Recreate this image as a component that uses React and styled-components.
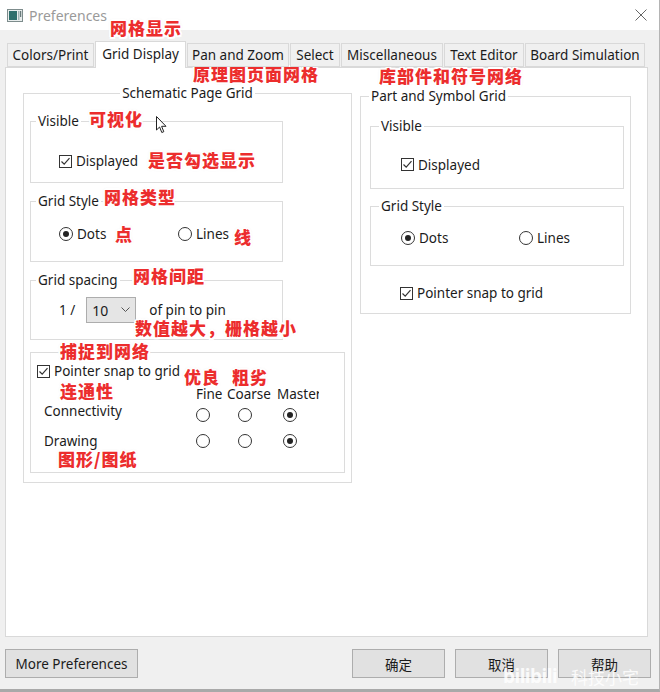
import React from 'react';
import styled, { createGlobalStyle } from 'styled-components';

const GlobalStyle = createGlobalStyle`
  html, body {
    margin: 0;
    padding: 0;
    background: #f0f0f0;
  }
  body {
    font-family: 'Noto Sans', 'Liberation Sans', sans-serif;
    font-size: 13px;
    color: #1b1b1b;
  }
`;

const tabs = [
    { label: 'Colors/Print', w: 87 },
    { label: 'Grid Display', w: 91, active: true },
    { label: 'Pan and Zoom', w: 102 },
    { label: 'Select', w: 50 },
    { label: 'Miscellaneous', w: 102 },
    { label: 'Text Editor', w: 80 },
    { label: 'Board Simulation', w: 120 },
];

const notes = [
    { text: '网格显示', x: 110, y: 19 },
    { text: '原理图页面网格', x: 193, y: 65 },
    { text: '库部件和符号网络', x: 379, y: 67 },
    { text: '可视化', x: 89, y: 110 },
    { text: '是否勾选显示', x: 148, y: 151 },
    { text: '网格类型', x: 104, y: 188 },
    { text: '点', x: 115, y: 225 },
    { text: '线', x: 234, y: 228 },
    { text: '网格间距', x: 133, y: 267 },
    { text: '数值越大，栅格越小', x: 135, y: 319 },
    { text: '捕捉到网络', x: 60, y: 342 },
    { text: '优良', x: 184, y: 368 },
    { text: '粗劣', x: 232, y: 368 },
    { text: '连通性', x: 60, y: 382 },
    { text: '图形/图纸', x: 58, y: 450 },
];

function CheckBox({ checked = true }) {
    return (
        <Box>
            {checked && (
                <svg width="11" height="11" viewBox="0 0 11 11">
                    <path d="M1.5 5.5 L4.2 8.2 L9.5 2.2" fill="none" stroke="#333" strokeWidth="1.2" />
                </svg>
            )}
        </Box>
    );
}

function Radio({ checked }) {
    return <RadioDot $on={checked} />;
}

function Check({ label }) {
    return (
        <Option>
            <CheckBox />
            <span>{label}</span>
        </Option>
    );
}

function RadioOption({ label, checked }) {
    return (
        <Option>
            <Radio checked={checked} />
            <span>{label}</span>
        </Option>
    );
}

function App() {
    return (
        <Window>
            <GlobalStyle />
            <TitleBar>
                <svg width="16" height="13" viewBox="0 0 16 13">
                    <rect x="0.5" y="0.5" width="15" height="12" fill="#e8eded" stroke="#7d8c8c" />
                    <rect x="2" y="2" width="8" height="9" fill="#2f6f6c" />
                    <rect x="11" y="2" width="1.5" height="9" fill="#9fb3b3" />
                    <rect x="13.2" y="2" width="1" height="6" fill="#4a5f5f" />
                </svg>
                <Title>Preferences</Title>
                <svg width="12" height="12" viewBox="0 0 12 12">
                    <path d="M0.5 0.5 L11.5 11.5 M11.5 0.5 L0.5 11.5" stroke="#666" strokeWidth="1" />
                </svg>
            </TitleBar>

            <Body>
                <TabStrip>
                    {tabs.map(t => (
                        <Tab key={t.label} $w={t.w} $active={t.active}>{t.label}</Tab>
                    ))}
                </TabStrip>

                <Panel>
                    <Group $w={329}>
                        <Legend $center>Schematic Page Grid</Legend>
                        <Stack $pt={10} $pl={6} $pb={9}>
                            <Group $w={253}>
                                <Legend $lx={5}>Visible</Legend>
                                <Content $h={52} $pt={10}>
                                    <Check label="Displayed" />
                                </Content>
                            </Group>
                            <Group $w={253}>
                                <Legend $lx={5}>Grid Style</Legend>
                                <Content $h={51} $pb={4}>
                                    <Choices $col={119}>
                                        <RadioOption label="Dots" checked />
                                        <RadioOption label="Lines" />
                                    </Choices>
                                </Content>
                            </Group>
                            <Group $w={253}>
                                <Legend $lx={5}>Grid spacing</Legend>
                                <Content $h={50} $pb={8}>
                                    <SpacingRow>
                                        <span>1 /</span>
                                        <Select>
                                            <span>10</span>
                                            <svg width="9" height="6" viewBox="0 0 9 6">
                                                <path d="M0.5 0.5 L4.5 4.5 L8.5 0.5" fill="none" stroke="#555" strokeWidth="1" />
                                            </svg>
                                        </Select>
                                        <PinText>of pin to pin</PinText>
                                    </SpacingRow>
                                </Content>
                            </Group>
                            <SnapBox>
                                <Check label="Pointer snap to grid" />
                                <HeaderGrid>
                                    <span />
                                    <span>Fine</span>
                                    <span>Coarse</span>
                                    <Clip>Master</Clip>
                                </HeaderGrid>
                                <RadioGrid $mt={0}>
                                    <RowLabel $shift={-4}>Connectivity</RowLabel>
                                    <Radio />
                                    <Radio />
                                    <Radio checked />
                                </RadioGrid>
                                <RadioGrid $mt={2}>
                                    <RowLabel>Drawing</RowLabel>
                                    <Radio />
                                    <Radio />
                                    <Radio checked />
                                </RadioGrid>
                            </SnapBox>
                        </Stack>
                    </Group>

                    <Group $w={271} $mt={3}>
                        <Legend $lx={8}>Part and Symbol Grid</Legend>
                        <Stack $pt={12} $pl={9} $pb={10} $gap={8}>
                            <Group $w={254}>
                                <Legend $lx={8}>Visible</Legend>
                                <Content $h={53} $pt={6} $pl={30}>
                                    <Check label="Displayed" />
                                </Content>
                            </Group>
                            <Group $w={254}>
                                <Legend $lx={8}>Grid Style</Legend>
                                <Content $h={50} $pb={4} $pl={30}>
                                    <Choices $col={118}>
                                        <RadioOption label="Dots" checked />
                                        <RadioOption label="Lines" />
                                    </Choices>
                                </Content>
                            </Group>
                            <SnapRow>
                                <Check label="Pointer snap to grid" />
                            </SnapRow>
                        </Stack>
                    </Group>
                </Panel>

                <ButtonRow>
                    <Button $w={133}>More Preferences</Button>
                    <ButtonGroup>
                        <Button $w={93} $cjk>确定</Button>
                        <Button $w={93} $cjk>取消</Button>
                        <Button $w={93} $cjk>帮助</Button>
                    </ButtonGroup>
                </ButtonRow>
            </Body>

            {notes.map(n => (
                <Note key={n.text} $x={n.x} $y={n.y}>{n.text}</Note>
            ))}

            <Cursor width="12" height="18" viewBox="0 0 12 18">
                <path d="M0.5 0.5 L0.5 14 L3.6 11 L5.8 16.5 L7.8 15.7 L5.6 10.3 L10 10.3 Z" fill="#fff" stroke="#222" strokeWidth="1" strokeLinejoin="round" />
            </Cursor>

            <Watermark>
                <Bili>bilibili</Bili>
                <span>科技小宅</span>
            </Watermark>
        </Window>
    );
}

export default App;

const Window = styled.div`
    position: relative;
    width: 660px;
    height: 692px;
    display: flex;
    flex-direction: column;
    background: #f0f0f0;
    border-right: 1px solid #b4b4b4;
    border-bottom: 3px solid #a9a9a9;
    box-sizing: border-box;
    overflow: hidden;
`;

const TitleBar = styled.div`
    height: 30px;
    flex: none;
    background: #fff;
    display: flex;
    align-items: center;
    gap: 6px;
    padding: 0 12px 0 7px;
`;

const Title = styled.span`
    flex: 1;
    font-size: 14px;
    color: #9a9a9a;
`;

const Body = styled.div`
    flex: 1;
    display: flex;
    flex-direction: column;
    padding: 11px 11px 0 5px;
`;

const TabStrip = styled.div`
    display: flex;
    align-items: flex-end;
    gap: 1px;
    height: 26px;
    padding-left: 2px;
    position: relative;
    z-index: 1;
`;

const Tab = styled.div`
    width: ${p => p.$w}px;
    height: ${p => (p.$active ? 27 : 24)}px;
    margin-bottom: ${p => (p.$active ? -1 : 0)}px;
    box-sizing: border-box;
    display: flex;
    align-items: center;
    justify-content: center;
    padding-bottom: ${p => (p.$active ? 3 : 0)}px;
    background: ${p => (p.$active ? '#fff' : '#f0f0f0')};
    border: 1px solid #d9d9d9;
    border-bottom: ${p => (p.$active ? 'none' : '1px solid #d9d9d9')};
    font-size: 13.5px;
    white-space: nowrap;
`;

const Panel = styled.div`
    height: 570px;
    box-sizing: border-box;
    background: #fff;
    border: 1px solid #d9d9d9;
    display: flex;
    align-items: flex-start;
    gap: 8px;
    padding: 16px 0 0 17px;
`;

const Group = styled.fieldset`
    margin: ${p => p.$mt || 0}px 0 0 0;
    padding: 0;
    min-width: 0;
    width: ${p => p.$w}px;
    box-sizing: border-box;
    border: 1px solid #dcdcdc;
`;

const Legend = styled.legend`
    padding: 0 2px;
    margin-left: ${p => (p.$center ? 'auto' : `${p.$lx}px`)};
    margin-right: ${p => (p.$center ? 'auto' : '0')};
    line-height: 18px;
    font-size: 13.5px;
`;

const Stack = styled.div`
    display: flex;
    flex-direction: column;
    gap: ${p => p.$gap ?? 9}px;
    padding: ${p => p.$pt}px 0 ${p => p.$pb}px ${p => p.$pl}px;
`;

const Content = styled.div`
    height: ${p => p.$h}px;
    box-sizing: border-box;
    padding: ${p => p.$pt || 0}px 0 ${p => p.$pb || 0}px ${p => p.$pl ?? 28}px;
    display: flex;
    align-items: center;
`;

const Option = styled.label`
    display: flex;
    align-items: center;
    gap: 4px;
    font-size: 13.5px;
    white-space: nowrap;
`;

const Box = styled.span`
    width: 13px;
    height: 13px;
    box-sizing: border-box;
    border: 1px solid #333;
    background: #fff;
    display: inline-flex;
    align-items: center;
    justify-content: center;
`;

const RadioDot = styled.span`
    width: 14px;
    height: 14px;
    box-sizing: border-box;
    border: 1px solid #333;
    border-radius: 50%;
    background: #fff;
    display: inline-flex;
    align-items: center;
    justify-content: center;

    &::after {
        content: '';
        width: 6px;
        height: 6px;
        border-radius: 50%;
        background: ${p => (p.$on ? '#222' : 'transparent')};
    }
`;

const Choices = styled.div`
    display: grid;
    grid-template-columns: ${p => p.$col}px auto;
    align-items: center;
`;

const SpacingRow = styled.div`
    display: flex;
    align-items: center;
    font-size: 13.5px;
`;

const Select = styled.div`
    width: 50px;
    height: 26px;
    box-sizing: border-box;
    margin-left: 11px;
    background: #e5e5e5;
    border: 1px solid #adadad;
    display: flex;
    align-items: center;
    justify-content: space-between;
    padding: 0 5px 0 5px;
    font-size: 14px;
`;

const PinText = styled.span`
    margin-left: 13px;
`;

const SnapBox = styled.div`
    width: 315px;
    height: 121px;
    box-sizing: border-box;
    margin-top: 3px;
    border: 1px solid #dcdcdc;
    padding: 9px 0 0 6px;
    font-size: 13.5px;
`;

const HeaderGrid = styled.div`
    display: grid;
    grid-template-columns: 152px 31px 50px 42px;
    margin: 5px 0 0 7px;
    line-height: 18px;
    white-space: nowrap;
`;

const Clip = styled.span`
    overflow: hidden;
`;

const RadioGrid = styled.div`
    display: grid;
    grid-template-columns: 152px 42px 45px 15px;
    align-items: center;
    height: 24px;
    margin: ${p => p.$mt}px 0 0 7px;
`;

const RowLabel = styled.span`
    position: relative;
    top: ${p => p.$shift || 0}px;
`;

const SnapRow = styled.div`
    height: 20px;
    display: flex;
    align-items: center;
    margin-top: 9px;
    padding-left: 30px;
`;

const ButtonRow = styled.div`
    display: flex;
    align-items: center;
    margin-top: 12px;
`;

const ButtonGroup = styled.div`
    display: flex;
    gap: 10px;
    margin-left: auto;
    margin-right: -3px;
`;

const Button = styled.button`
    width: ${p => p.$w}px;
    height: 29px;
    box-sizing: border-box;
    background: #e1e1e1;
    border: 1px solid #adadad;
    border-radius: 0;
    padding: 0;
    font-family: ${p => (p.$cjk ? "'Noto Sans CJK SC', sans-serif" : "'Noto Sans', sans-serif")};
    font-size: 13.5px;
    color: #1b1b1b;
`;

const Note = styled.span`
    position: absolute;
    left: ${p => p.$x}px;
    top: ${p => p.$y}px;
    font-family: 'Noto Sans CJK SC', sans-serif;
    font-weight: 900;
    font-size: 17px;
    line-height: 18px;
    letter-spacing: 1px;
    white-space: nowrap;
    color: #ec2d2d;
    text-shadow:
        2px 0 0 #fff, -2px 0 0 #fff, 0 2px 0 #fff, 0 -2px 0 #fff,
        1.5px 1.5px 0 #fff, -1.5px 1.5px 0 #fff, 1.5px -1.5px 0 #fff, -1.5px -1.5px 0 #fff,
        0 0 3px rgba(0, 0, 0, 0.25);
`;

const Cursor = styled.svg`
    position: absolute;
    left: 156px;
    top: 116px;
`;

const Watermark = styled.div`
    position: absolute;
    left: 503px;
    top: 663px;
    display: flex;
    align-items: center;
    gap: 14px;
    font-family: 'Noto Sans CJK SC', sans-serif;
    font-size: 17px;
    color: rgba(255, 255, 255, 0.85);
    white-space: nowrap;
`;

const Bili = styled.span`
    font-family: 'Noto Sans', sans-serif;
    font-weight: 700;
    font-size: 19px;
    letter-spacing: -0.5px;
`;
